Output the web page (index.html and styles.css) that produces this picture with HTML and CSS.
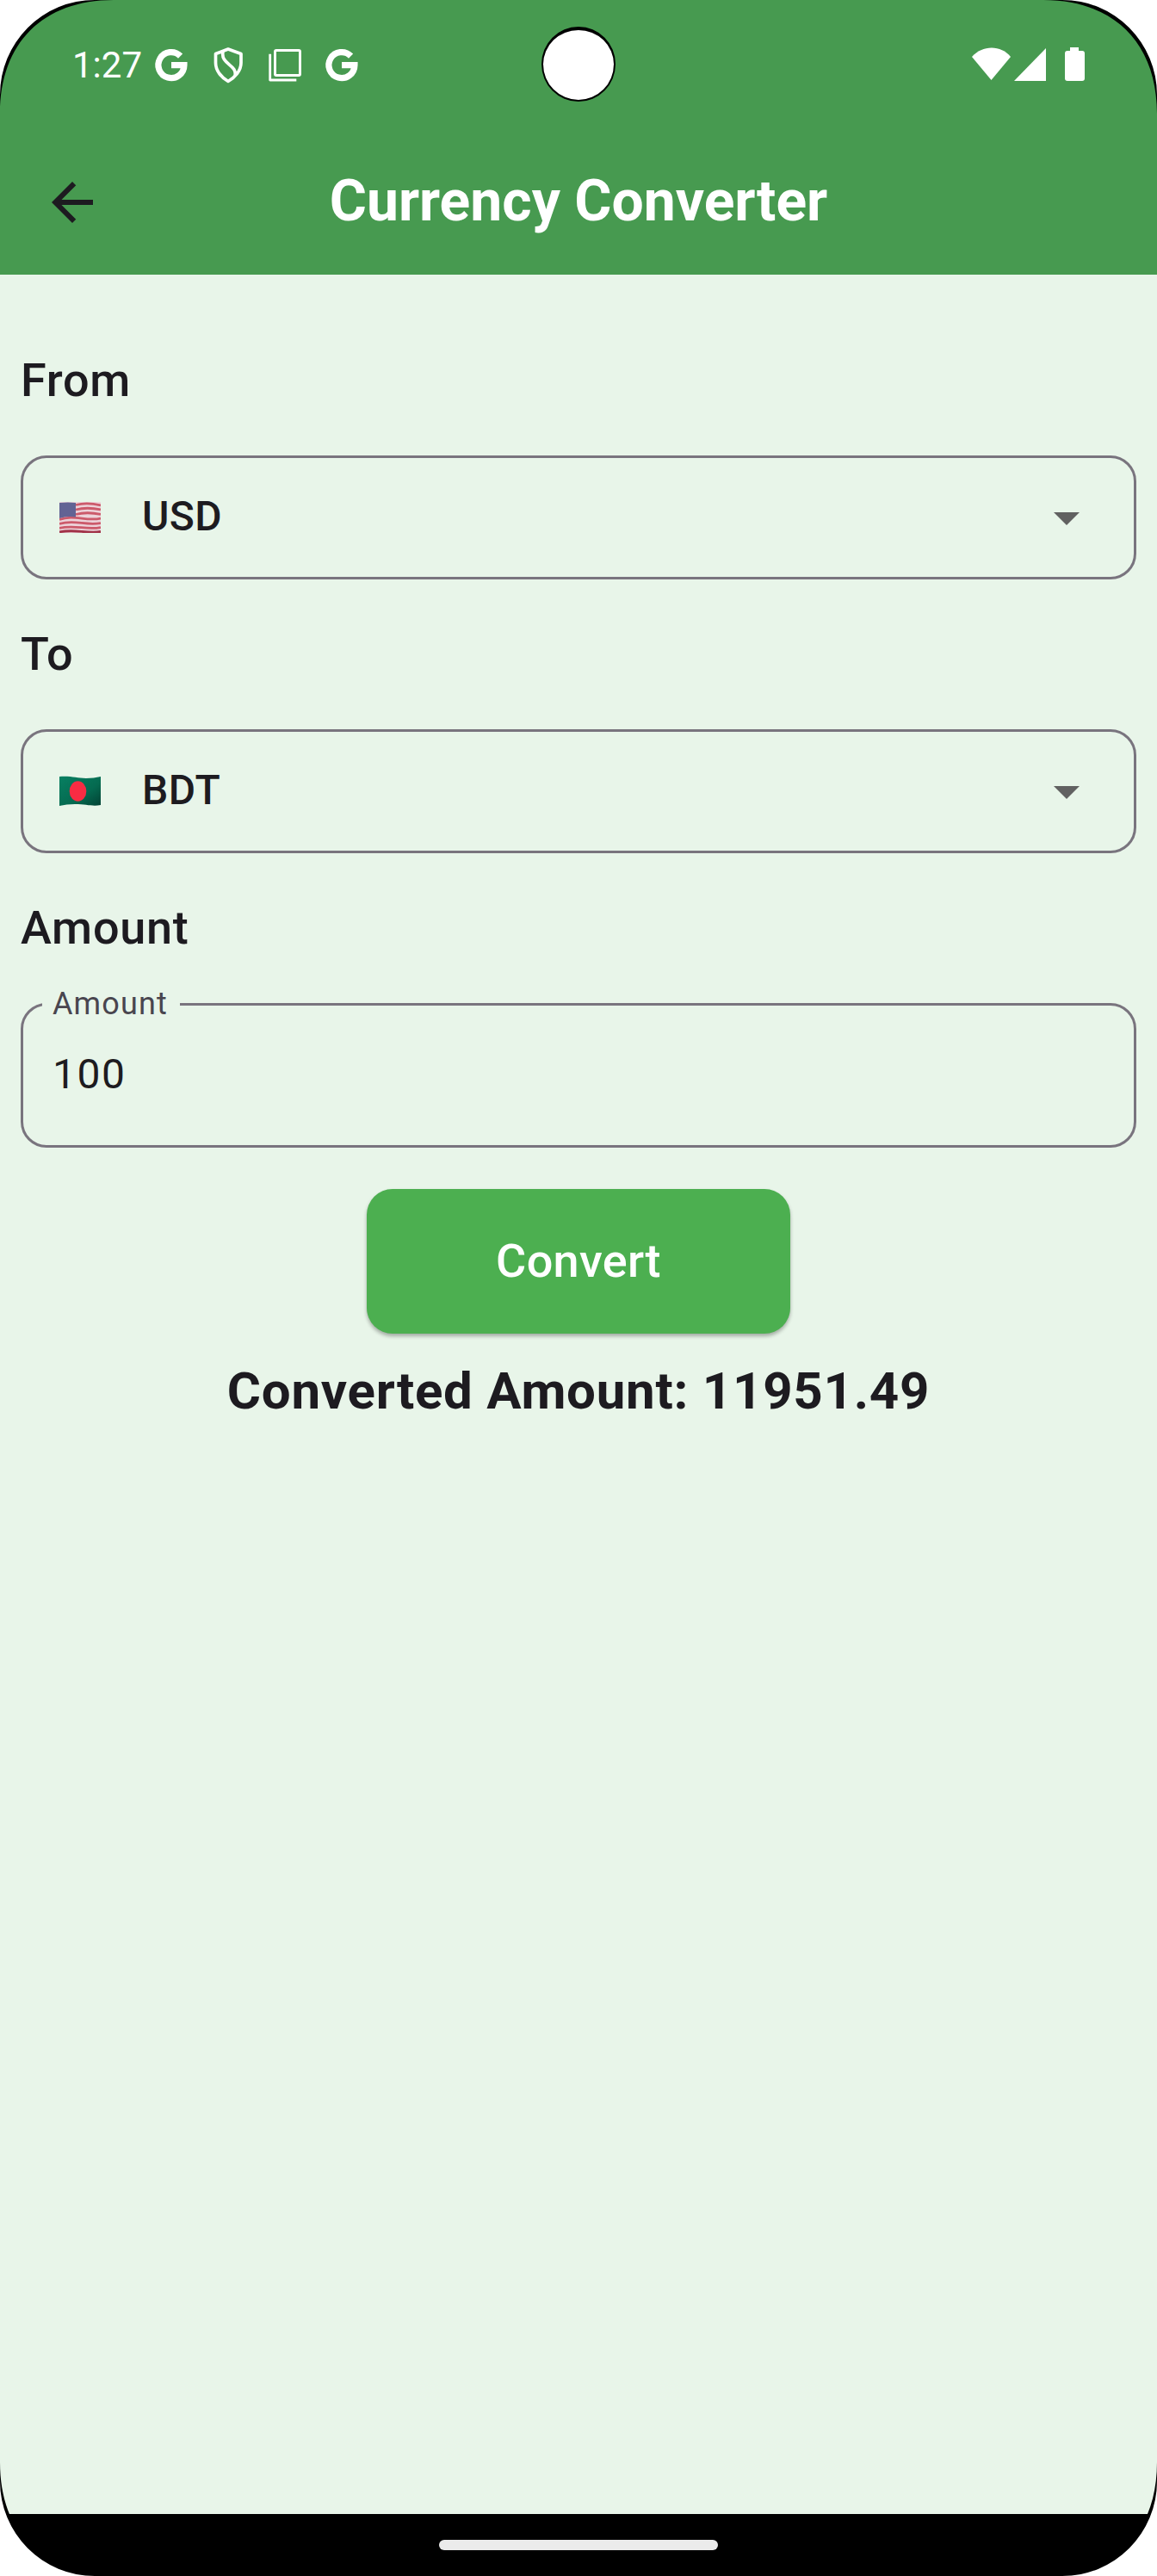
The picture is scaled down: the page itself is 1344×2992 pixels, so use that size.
FILE: index.html
```html
<!DOCTYPE html>
<html lang="en">
<head>
<meta charset="utf-8">
<title>Currency Converter</title>
<link rel="stylesheet" href="styles.css">
</head>
<body>
<div class="phone">
  <header class="top">
    <div class="status">
      <span class="time">1:27</span>
      <svg class="status-left" width="240" height="44" viewBox="0 0 240 44" fill="none" stroke="#fff">
        <g id="g-logo"><path d="M31.600 11.100A15 15 0 1 0 35.900 21.700H21" stroke-width="7.300"/></g>
        <path d="M87 3 102 8.500V19C102 28 95 36 87 40.500C79 36 72.500 28 72.500 19V8.500ZM81 6C78 21 98 21 95 34" stroke-width="3.700" stroke-linejoin="round"/>
        <rect x="141.500" y="4.500" width="29" height="29" rx="1.500" stroke-width="3"/>
        <path d="M135.700 8.700V39H166.300" stroke-width="2.800" stroke-linejoin="round"/>
        <use href="#g-logo" x="198"/>
      </svg>
      <svg class="status-right" width="132" height="40" viewBox="0 0 132 40" fill="#fff">
        <path d="M0 11C12-3 34-3 45 11L22.500 38Z"/>
        <path d="M86 1V39H49Z"/>
        <path d="M114 0H124V4H128Q131 4 131 7V36Q131 39 128 39H111Q108 39 108 36V7Q108 4 111 4H114Z"/>
      </svg>
    </div>
    <div class="appbar">
      <svg class="back" width="72" height="72" viewBox="0 0 24 24" fill="#1d1b20"><path d="M20 11H7.830l5.590-5.590L12 4l-8 8 8 8 1.410-1.410L7.830 13H20z"/></svg>
      <h1 class="title">Currency Converter</h1>
    </div>
  </header>
  <main class="form">
    <h2 class="label">From</h2>
    <div class="select">
      <svg class="flag" width="48" height="36" viewBox="0 0 48 36">
        <rect width="48" height="36" fill="#edd3da"/>
        <g fill="none" stroke="#cc5a6b" stroke-width="2.800">
          <path d="M19 3.500Q32 0 48 4"/><path d="M19 9Q32 5.500 48 9"/><path d="M19 14.500Q32 11 48 14.500"/>
          <path d="M0 20.500C17 14 31 23 48 19"/><path d="M0 25.500C17 20 31 28 48 24.500"/><path d="M0 30.500C17 26 31 33 48 29.500"/><path d="M0 35C17 31 31 37 48 34.500" stroke="#a13248"/>
        </g>
        <path d="M0 1Q10 0 19 1V17.500Q9 16 0 19Z" fill="#626394"/>
      </svg>
      <span class="code">USD</span>
      <svg class="caret" width="72" height="72" viewBox="0 0 24 24" fill="#616161"><path d="M7 10l5 5 5-5z"/></svg>
    </div>
    <h2 class="label">To</h2>
    <div class="select">
      <svg class="flag" width="48" height="36" viewBox="0 0 48 36">
        <defs><linearGradient id="bd" x1="0" y1="0" x2="1" y2="1"><stop offset="0" stop-color="#078062"/><stop offset=".6" stop-color="#056a50"/><stop offset="1" stop-color="#024234"/></linearGradient></defs>
        <path d="M0 1C14 0 20 3 31 3Q40 3 48 1V34C38 36 32 33 18 33Q8 33 0 35Z" fill="url(#bd)"/>
        <ellipse cx="21.500" cy="18" rx="9.800" ry="11.800" fill="#f82c43"/>
      </svg>
      <span class="code">BDT</span>
      <svg class="caret" width="72" height="72" viewBox="0 0 24 24" fill="#616161"><path d="M7 10l5 5 5-5z"/></svg>
    </div>
    <h2 class="label">Amount</h2>
    <div class="input">
      <span class="floating">Amount</span>
      <span class="value">100</span>
    </div>
    <button class="convert">Convert</button>
    <p class="result">Converted Amount: 11951.49</p>
  </main>
  <footer class="nav"><div class="handle"></div></footer>
  <div class="camera"></div>
  <svg class="corners" width="1344" height="2992" viewBox="0 0 1344 2992">
    <defs>
      <g id="corner"><path d="M0 0H132C50 0 0 50 0 132Z" fill="#000"/><path d="M0 0H110A110 110 0 0 0 0 110Z" fill="#fff"/></g>
    </defs>
    <use href="#corner"/>
    <use href="#corner" transform="translate(1344 0) scale(-1 1)"/>
    <use href="#corner" transform="translate(0 2992) scale(1 -1)"/>
    <use href="#corner" transform="translate(1344 2992) scale(-1 -1)"/>
  </svg>
</div>
</body>
</html>
```

FILE: styles.css
```css
* { box-sizing: border-box; }
body { margin: 0; background: #fff; }
h1, h2, p { margin: 0; }
svg { display: block; flex: none; }

.phone {
  position: relative;
  display: flex;
  flex-direction: column;
  width: 1344px;
  height: 2992px;
  overflow: hidden;
  background: #e8f5e9;
  color: #1d1b20;
  font-family: Roboto, sans-serif;
}

.top { height: 319px; background: #479a50; color: #fff; }
.status { display: flex; height: 151px; padding: 0 83px 0 84px; }
.time { width: 94px; padding-top: 51px; font-size: 42px; line-height: 49px; }
.status-left { margin-top: 54px; }
.status-right { margin: 55px 0 0 auto; }
.appbar { display: flex; align-items: center; height: 168px; padding: 0 48px; }
.title { flex: 1; margin-right: 72px; padding-bottom: 3px; text-align: center; font-size: 66px; line-height: 84px; font-weight: 700; }

.form { display: flex; flex: 1; flex-direction: column; padding: 84px 24px 0; }
.label { height: 78px; font-size: 54px; line-height: 78px; font-weight: 500; letter-spacing: 0.750px; }
.select {
  display: flex;
  align-items: center;
  height: 144px;
  margin: 48px 0;
  padding: 0 42px;
  border: 3px solid #79747e;
  border-radius: 30px;
}
.code { flex: 1; padding: 0 0 3px 48px; font-size: 48px; line-height: 72px; font-weight: 500; letter-spacing: 0.450px; }
.input {
  position: relative;
  height: 168px;
  margin-top: 48px;
  padding: 44px 34px;
  border: 3px solid #79747e;
  border-radius: 30px;
}
.floating {
  position: absolute;
  top: -26px;
  left: 22px;
  padding: 0 14px 0 12px;
  background: #e8f5e9;
  color: #49454f;
  font-size: 36px;
  line-height: 48px;
  letter-spacing: 1.125px;
}
.value { font-size: 48px; line-height: 72px; letter-spacing: 1.500px; }
.convert {
  align-self: center;
  width: 492px;
  height: 168px;
  margin-top: 48px;
  padding: 0;
  border: 0;
  border-radius: 30px;
  background: #4caf50;
  box-shadow: 0 3px 4px rgba(0, 0, 0, 0.300);
  color: #fff;
  font: 500 54px/78px Roboto, sans-serif;
  letter-spacing: 0.300px;
}
.result { margin-top: 24px; text-align: center; font-size: 60px; line-height: 86px; font-weight: 700; letter-spacing: 0.750px; }

.nav { display: flex; justify-content: center; height: 72px; padding-top: 30px; background: #000; }
.handle { width: 324px; height: 12px; border-radius: 6px; background: #ebebeb; }
.camera {
  position: absolute;
  top: 31px;
  left: 629px;
  width: 86px;
  height: 87px;
  border: 2px solid #000;
  border-top-width: 4px;
  border-radius: 50%;
  background: #fff;
}
.corners { position: absolute; inset: 0; pointer-events: none; }
```
